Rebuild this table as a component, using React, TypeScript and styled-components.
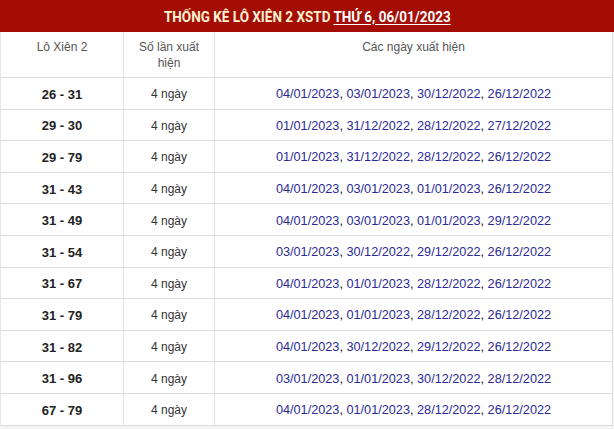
import React from "react";
import styled, { createGlobalStyle } from "styled-components";

const Global = createGlobalStyle`
  html, body { margin: 0; padding: 0; background: #fff; }
  body { font-family: Arial, "Liberation Sans", sans-serif; }
`;

const Wrap = styled.div`
  width: 614px;
  height: 429px;
  overflow: hidden;
  background: #f4f4f4;
`;

const TitleBar = styled.div`
  height: 32px;
  background: #a30d03;
  display: flex;
  align-items: center;
  justify-content: center;
`;

const Title = styled.div`
  font-family: Roboto, "Liberation Sans", sans-serif;
  font-weight: 700;
  font-size: 15px;
  color: #fff1d2;
  white-space: nowrap;
  transform: scaleX(0.9);
  margin-top: 1px;
`;

const TitleLink = styled.span`
  color: #ffffff;
  text-decoration: underline;
  text-underline-offset: 2px;
`;

const Table = styled.div`
  width: 611px;
  display: grid;
  grid-template-columns: 122px 91px 1fr;
  background: #fff;
  border-left: 1px solid #e6e6e6;
  border-right: 1px solid #dcdcdc;
`;

const HeadCell = styled.div<{ first?: boolean }>`
  height: 46px;
  box-sizing: border-box;
  padding: 7px 14px 0;
  text-align: center;
  font-size: 12px;
  line-height: 16px;
  color: #555;
  border-bottom: 1px solid #dcdcdc;
  border-left: ${(p) => (p.first ? "none" : "1px solid #e2e2e2")};
`;

const Cell = styled.div<{ first?: boolean; kind: "pair" | "count" | "dates" }>`
  height: 31.6px;
  box-sizing: border-box;
  padding-top: 2px;
  display: flex;
  align-items: center;
  justify-content: center;
  border-bottom: 1px solid #dcdcdc;
  border-left: ${(p) => (p.first ? "none" : "1px solid #e2e2e2")};
  font-size: ${(p) => (p.kind === "count" ? "12px" : p.kind === "dates" ? "12.7px" : "13px")};
  font-weight: ${(p) => (p.kind === "pair" ? 700 : 400)};
  color: ${(p) => (p.kind === "pair" ? "#222" : "#333")};
  white-space: nowrap;
`;

const DateLink = styled.span`
  color: #2a2a96;
`;

const Comma = styled.span`
  color: #222;
`;

const rows: [string, string[]][] = [
  ["26 - 31", ["04/01/2023", "03/01/2023", "30/12/2022", "26/12/2022"]],
  ["29 - 30", ["01/01/2023", "31/12/2022", "28/12/2022", "27/12/2022"]],
  ["29 - 79", ["01/01/2023", "31/12/2022", "28/12/2022", "26/12/2022"]],
  ["31 - 43", ["04/01/2023", "03/01/2023", "01/01/2023", "26/12/2022"]],
  ["31 - 49", ["04/01/2023", "03/01/2023", "01/01/2023", "29/12/2022"]],
  ["31 - 54", ["03/01/2023", "30/12/2022", "29/12/2022", "26/12/2022"]],
  ["31 - 67", ["04/01/2023", "01/01/2023", "28/12/2022", "26/12/2022"]],
  ["31 - 79", ["04/01/2023", "01/01/2023", "28/12/2022", "26/12/2022"]],
  ["31 - 82", ["04/01/2023", "30/12/2022", "29/12/2022", "26/12/2022"]],
  ["31 - 96", ["03/01/2023", "01/01/2023", "30/12/2022", "28/12/2022"]],
  ["67 - 79", ["04/01/2023", "01/01/2023", "28/12/2022", "26/12/2022"]],
];

export default function App() {
  return (
    <>
      <Global />
      <Wrap>
        <TitleBar>
          <Title>
            THỐNG KÊ LÔ XIÊN 2 XSTD <TitleLink>THỨ 6, 06/01/2023</TitleLink>
          </Title>
        </TitleBar>
        <Table>
          <HeadCell first>Lô Xiên 2</HeadCell>
          <HeadCell>Số lần xuất hiện</HeadCell>
          <HeadCell>Các ngày xuất hiện</HeadCell>
          {rows.map(([pair, dates]) => (
            <React.Fragment key={pair}>
              <Cell first kind="pair">{pair}</Cell>
              <Cell kind="count">4 ngày</Cell>
              <Cell kind="dates">
                <span>
                  {dates.map((d, i) => (
                    <React.Fragment key={i}>
                      <DateLink>{d}</DateLink>
                      {i < dates.length - 1 && <Comma>, </Comma>}
                    </React.Fragment>
                  ))}
                </span>
              </Cell>
            </React.Fragment>
          ))}
        </Table>
      </Wrap>
    </>
  );
}
